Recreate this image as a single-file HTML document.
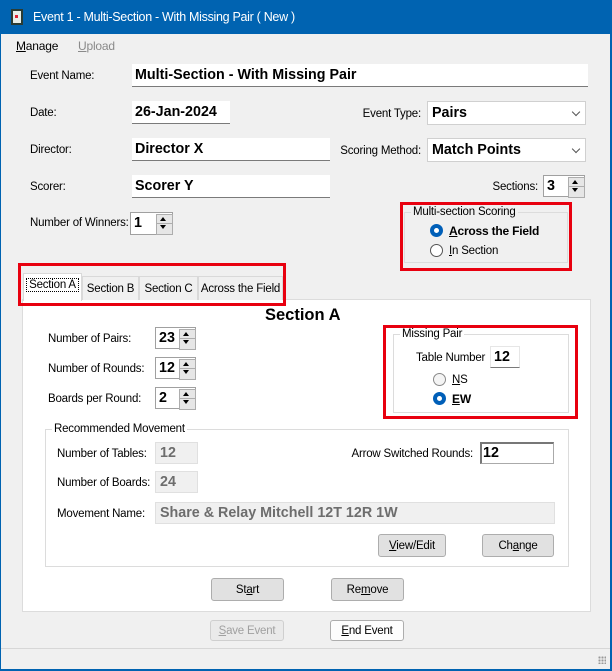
<!DOCTYPE html>
<html><head><meta charset="utf-8"><style>
*{box-sizing:border-box;margin:0;padding:0}
body{width:612px;height:671px;overflow:hidden;background:#f0f0f0;font-family:"Liberation Sans",sans-serif;font-size:12px;color:#000;position:relative}
.a{position:absolute;white-space:nowrap}
.lbl{position:absolute;font-size:11.5px;letter-spacing:-0.2px;line-height:14px;white-space:nowrap;margin-top:1px}
.r{text-align:right}
.tb{position:absolute;background:#fff;border-bottom:1px solid #7a7a7a;font-weight:bold;font-size:14.3px;line-height:22px;padding-left:3px;white-space:nowrap}
.combo{position:absolute;background:#fff;border:1px solid #d0d0d0;font-weight:bold;font-size:14.3px;line-height:22px;padding-left:4px}
.combo:after{content:"";position:absolute;right:6px;top:7px;width:5px;height:5px;border-right:1px solid #555;border-bottom:1px solid #555;transform:rotate(45deg)}
.spin{position:absolute;background:#fff;border:1px solid #a0a0a0;font-weight:bold;font-size:14.3px;line-height:20px;padding-left:3px}
.spin i{position:absolute;right:1px;top:1px;width:15px;height:19px}
.spin i:before,.spin i:after{content:"";position:absolute;left:0;width:15px;height:10px;background:#e6e6e6;border:1px solid #adadad}
.spin i:before{top:0}.spin i:after{top:9px}
.spin b{position:absolute;right:6px;width:0;height:0;border-left:3px solid transparent;border-right:3px solid transparent;z-index:2}
.up{top:4px;border-bottom:4px solid #000}.dn{top:12px;border-top:4px solid #000}
.grp{position:absolute;border:1px solid #dcdcdc}
.grp span{position:absolute;top:-8px;left:6px;padding:0 2px;line-height:14px;font-size:11.5px;letter-spacing:-0.2px;white-space:nowrap}
.red{position:absolute;border:3px solid #e8000f}
.btn{position:absolute;background:#e1e1e1;border:1px solid #adadad;border-radius:3px;text-align:center;font-size:11.5px;letter-spacing:-0.2px;line-height:22px;white-space:nowrap}
.dis{position:absolute;background:#eaeaea;border:1px solid #cfcfcf;border-radius:3px;text-align:center;font-size:11.5px;letter-spacing:-0.2px;line-height:20px;color:#a0a0a0}
.gbox{position:absolute;background:#f0f0f0;border:1px solid #e0e0e0;color:#6d6d6d;font-weight:bold;font-size:14.3px;line-height:20px;padding-left:4px;white-space:nowrap}
.rad{position:absolute;width:13px;height:13px;border-radius:50%;border:1px solid #333;background:#fff}
.rad.on{border:4px solid #005fb8}
.tab{position:absolute;background:#f0f0f0;border:1px solid #d9d9d9;border-bottom:none;text-align:center;font-size:11.5px;letter-spacing:-0.2px;line-height:24px;white-space:nowrap}
u{text-decoration:underline}
</style></head><body>
<div class="a" style="left:0;top:0;width:612px;height:34px;background:#0063b1"></div>
<div class="a" style="left:0;top:0;width:1px;height:671px;background:#0063b1"></div>
<div class="a" style="right:0;top:0;width:2px;height:671px;background:#0063b1"></div>
<div class="a" style="left:0;bottom:0;width:612px;height:2px;background:#0063b1"></div>
<div class="a" style="left:11px;top:9px;width:12px;height:16px;background:#e8eee8;border:2px solid #2a3b33"></div>
<div class="a" style="left:15px;top:15px;width:3px;height:3px;background:#d23"></div>
<div class="a" style="left:33px;top:9px;color:#fff;font-size:12.5px;letter-spacing:-0.3px;line-height:16px">Event 1 - Multi-Section - With Missing Pair ( New )</div>
<div class="lbl" style="left:16px;top:38px;font-size:12px"><u>M</u>anage</div>
<div class="lbl" style="left:78px;top:38px;font-size:12px;color:#8a8a8a"><u>U</u>pload</div>

<div class="lbl" style="left:30px;top:68px">Event Name:</div>
<div class="tb" style="left:132px;top:64px;width:456px;height:23px">Multi-Section - With Missing Pair</div>
<div class="lbl" style="left:30px;top:105px">Date:</div>
<div class="tb" style="left:132px;top:101px;width:98px;height:23px">26-Jan-2024</div>
<div class="lbl r" style="left:300px;width:121px;top:106px">Event Type:</div>
<div class="combo" style="left:427px;top:101px;width:159px;height:24px">Pairs</div>
<div class="lbl" style="left:30px;top:142px">Director:</div>
<div class="tb" style="left:132px;top:138px;width:198px;height:23px">Director X</div>
<div class="lbl r" style="left:300px;width:121px;top:143px">Scoring Method:</div>
<div class="combo" style="left:427px;top:138px;width:159px;height:24px">Match Points</div>
<div class="lbl" style="left:30px;top:179px">Scorer:</div>
<div class="tb" style="left:132px;top:175px;width:198px;height:23px">Scorer Y</div>
<div class="lbl r" style="left:437px;width:101px;top:179px">Sections:</div>
<div class="spin" style="left:543px;top:175px;width:42px;height:22px">3<i></i><b class="up"></b><b class="dn"></b></div>
<div class="lbl" style="left:30px;top:215px">Number of Winners:</div>
<div class="spin" style="left:130px;top:212px;width:43px;height:23px">1<i></i><b class="up"></b><b class="dn"></b></div>

<div class="grp" style="left:404px;top:212px;width:164px;height:51px"><span style="background:#f0f0f0">Multi-section Scoring</span></div>
<div class="rad on" style="left:430px;top:224px"></div>
<div class="lbl" style="left:449px;top:223px;font-weight:bold;font-size:12px"><u>A</u>cross the Field</div>
<div class="rad" style="left:430px;top:244px;border-color:#555"></div>
<div class="lbl" style="left:449px;top:243px"><u>I</u>n Section</div>
<div class="red" style="left:400px;top:202px;width:172px;height:69px"></div>

<div class="a" style="left:22px;top:299px;width:569px;height:313px;background:#fff;border:1px solid #dcdcdc"></div>
<div class="tab" style="left:82px;top:276px;width:57px;height:24px">Section B</div>
<div class="tab" style="left:139px;top:276px;width:59px;height:24px">Section C</div>
<div class="tab" style="left:198px;top:276px;width:85px;height:24px">Across the Field</div>
<div class="tab" style="left:23px;top:273px;width:59px;height:28px;background:#fff;line-height:20px;padding-top:1px"><span style="border:1px dotted #000;padding:0 2px">Section A</span></div>
<div class="red" style="left:18px;top:263px;width:268px;height:43px"></div>

<div class="lbl" style="left:265px;top:304px;font-weight:bold;font-size:16.5px;letter-spacing:0;line-height:20px">Section A</div>
<div class="lbl" style="left:48px;top:331px">Number of Pairs:</div>
<div class="spin" style="left:155px;top:327px;width:41px;height:22px">23<i></i><b class="up"></b><b class="dn"></b></div>
<div class="lbl" style="left:48px;top:361px">Number of Rounds:</div>
<div class="spin" style="left:155px;top:357px;width:41px;height:22px">12<i></i><b class="up"></b><b class="dn"></b></div>
<div class="lbl" style="left:48px;top:391px">Boards per Round:</div>
<div class="spin" style="left:155px;top:387px;width:41px;height:22px">2<i></i><b class="up"></b><b class="dn"></b></div>

<div class="grp" style="left:393px;top:334px;width:176px;height:79px"><span style="background:#fff">Missing Pair</span></div>
<div class="lbl" style="left:416px;top:350px">Table Number</div>
<div class="tb" style="left:490px;top:346px;width:30px;height:22px;border:1px solid #e6e6e6;border-bottom:1px solid #7a7a7a;line-height:20px">12</div>
<div class="rad" style="left:433px;top:373px;border-color:#888;background:#f4f4f4"></div>
<div class="lbl" style="left:452px;top:372px"><u>N</u>S</div>
<div class="rad on" style="left:433px;top:392px"></div>
<div class="lbl" style="left:452px;top:391px;font-weight:bold;font-size:12px"><u>E</u>W</div>
<div class="red" style="left:383px;top:325px;width:195px;height:94px"></div>

<div class="grp" style="left:45px;top:429px;width:524px;height:138px"><span style="background:#fff">Recommended Movement</span></div>
<div class="lbl" style="left:57px;top:446px">Number of Tables:</div>
<div class="gbox" style="left:155px;top:442px;width:43px;height:22px">12</div>
<div class="lbl" style="left:57px;top:475px">Number of Boards:</div>
<div class="gbox" style="left:155px;top:471px;width:43px;height:22px">24</div>
<div class="lbl" style="left:57px;top:506px">Movement Name:</div>
<div class="gbox" style="left:155px;top:502px;width:400px;height:22px">Share &amp; Relay Mitchell 12T 12R 1W</div>
<div class="lbl r" style="left:320px;width:153px;top:446px">Arrow Switched Rounds:</div>
<div class="tb" style="left:480px;top:442px;width:74px;height:22px;border:1px solid #aaa;border-top:2px solid #777;border-left:2px solid #777;line-height:18px;padding-left:1px">12</div>
<div class="btn" style="left:378px;top:534px;width:68px;height:23px"><u>V</u>iew/Edit</div>
<div class="btn" style="left:482px;top:534px;width:72px;height:23px">Ch<u>a</u>nge</div>

<div class="btn" style="left:211px;top:578px;width:73px;height:23px">St<u>a</u>rt</div>
<div class="btn" style="left:331px;top:578px;width:73px;height:23px">Re<u>m</u>ove</div>

<div class="dis" style="left:210px;top:620px;width:74px;height:21px;line-height:21px"><u>S</u>ave Event</div>
<div class="btn" style="left:330px;top:620px;width:74px;height:21px;background:#fdfdfd;line-height:20px"><u>E</u>nd Event</div>
<div class="a" style="left:1px;top:648px;width:609px;height:1px;background:#d7d7d7"></div>
<div class="a" style="left:598px;top:656px;width:8px;height:8px;background:radial-gradient(circle,#999 1px,transparent 1.2px) 0 0/3px 3px"></div>
</body></html>
